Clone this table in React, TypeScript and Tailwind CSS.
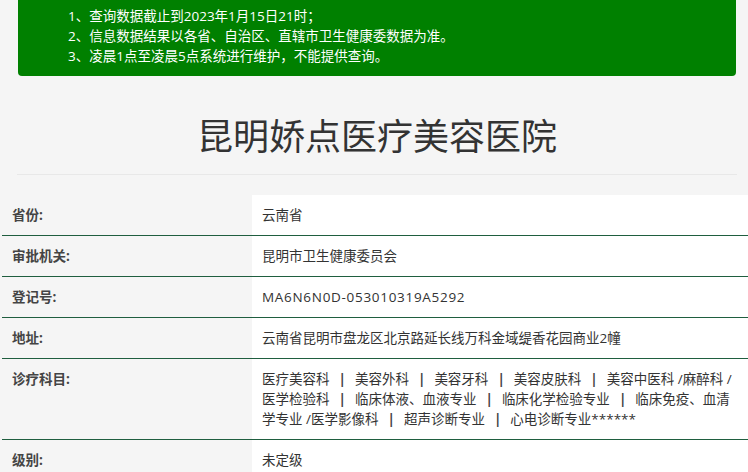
import { Fragment } from 'react';

const notices = [
  '1、查询数据截止到2023年1月15日21时；',
  '2、信息数据结果以各省、自治区、直辖市卫生健康委数据为准。',
  '3、凌晨1点至凌晨5点系统进行维护，不能提供查询。',
];

const subjects = [
  '医疗美容科',
  '美容外科',
  '美容牙科',
  '美容皮肤科',
  '美容中医科 /麻醉科 /医学检验科',
  '临床体液、血液专业',
  '临床化学检验专业',
  '临床免疫、血清学专业 /医学影像科',
  '超声诊断专业',
  '心电诊断专业******',
];

function Subjects() {
  return (
    <>
      {subjects.map((s, i) => (
        <Fragment key={s}>
          {i > 0 && <b className="px-[9px] text-[#444]">|</b>}
          {s}
        </Fragment>
      ))}
    </>
  );
}

const rows: { label: string; value: React.ReactNode }[] = [
  { label: '省份:', value: '云南省' },
  { label: '审批机关:', value: '昆明市卫生健康委员会' },
  { label: '登记号:', value: <span className="tracking-[0.7px]">MA6N6N0D-053010319A5292</span> },
  { label: '地址:', value: '云南省昆明市盘龙区北京路延长线万科金域缇香花园商业2幢' },
  { label: '诊疗科目:', value: <Subjects /> },
  { label: '级别:', value: '未定级' },
];

export default function App() {
  return (
    <div className="w-[748px] h-[472px] overflow-hidden bg-[#f5f5f5] text-[#333] font-['Open_Sans','Noto_Sans_CJK_SC',sans-serif]">
      <div className="ml-[18px] w-[718px] h-[76px] bg-[#008000] rounded-b-[4px] pt-[6px] pl-[50px] text-white text-[13.5px] leading-[20px]">
        {notices.map((n) => (
          <div key={n}>{n}</div>
        ))}
      </div>

      <div className="ml-[17px] w-[720px] border-b border-[#e8e8e8] h-[99px] flex items-center justify-center">
        <h1 className="text-[36px] leading-none font-normal text-[#333] mt-[24px]">昆明娇点医疗美容医院</h1>
      </div>

      <div className="mt-[20px] ml-[2px]">
        {rows.map((r) => (
          <div key={r.label} className="flex border-b border-[#1f5e3f] text-[13.5px] leading-[20px]">
            <div className="w-[250px] shrink-0 pl-[10px] pt-[10px] pb-[10px] font-bold text-[#444]">{r.label}</div>
            <div className="flex-1 bg-white pl-[10px] pr-[10px] pt-[10px] pb-[10px] text-[#333]">{r.value}</div>
          </div>
        ))}
      </div>
    </div>
  );
}
